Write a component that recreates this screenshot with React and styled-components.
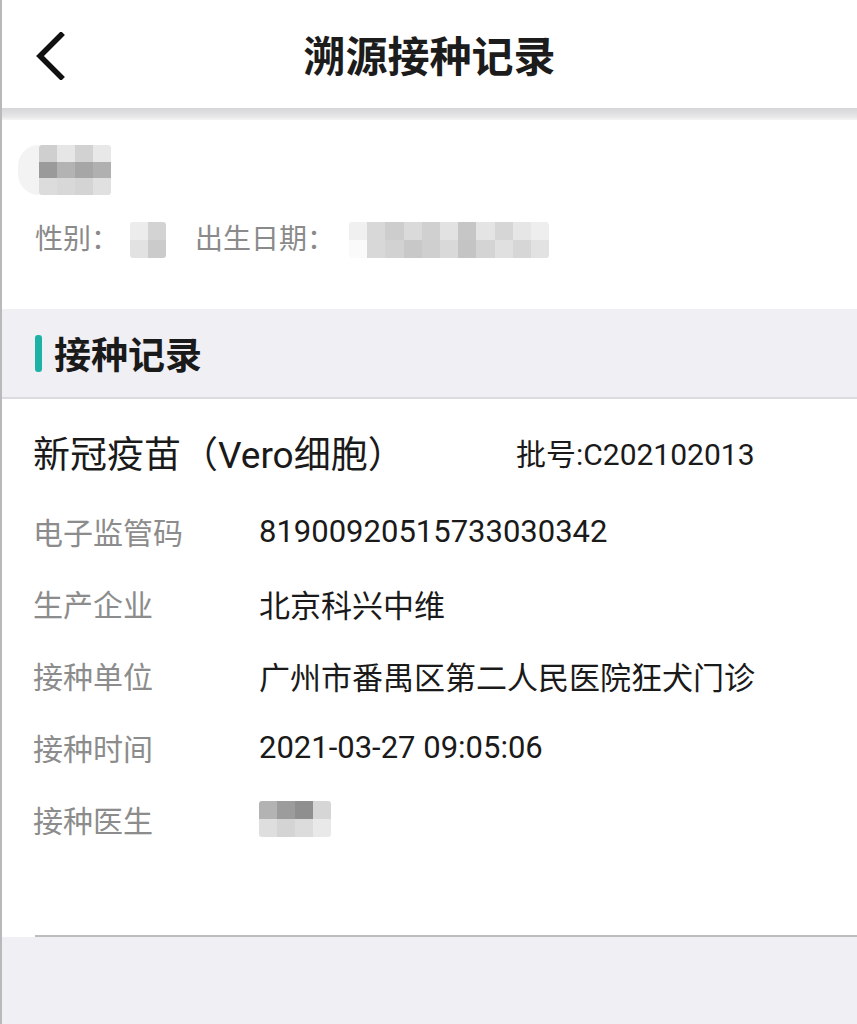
import styled, { createGlobalStyle } from "styled-components";

const GlobalStyle = createGlobalStyle`
    html, body {
        margin: 0;
        padding: 0;
        background: #efeff4;
    }
    * {
        box-sizing: border-box;
    }
`

const FONT = `Roboto, "Noto Sans CJK SC", "Noto Sans", sans-serif`

const records = [
    { label: "电子监管码", value: "81900920515733030342" },
    { label: "生产企业", value: "北京科兴中维" },
    { label: "接种单位", value: "广州市番禺区第二人民医院狂犬门诊" },
    { label: "接种时间", value: "2021-03-27 09:05:06" },
    { label: "接种医生", mosaic: [["#b3b3b3", "#9c9c9c", "#8f8f8f", "#d6d6d6"], ["#dedede", "#d4d4d4", "#dcdcdc", "#e9e9e9"]] },
]

const nameCells = [
    ["#cfcfcf", "#e6e6e6", "#d2d2d2", "#e8e8e8"],
    ["#9a9a9a", "#b3b3b3", "#a6a6a6", "#b0b0b0"],
    ["#dcdcdc", "#d8d8d8", "#d4d4d4", "#e0e0e0"],
]
const genderCells = [["#ececec", "#d3d3d3"], ["#e2e2e2", "#cbcbcb"]]
const birthCells = [
    ["#f0f0f0", "#d8d8d8", "#cdcdcd", "#dadada", "#d0d0d0", "#e2e2e2", "#c6c6c6", "#e4e4e4", "#d6d6d6", "#e6e6e6", "#eeeeee"],
    ["#fafafa", "#d8d8d8", "#d2d2d2", "#c8c8c8", "#cfcfcf", "#d9d9d9", "#c4c4c4", "#d4d4d4", "#e0e0e0", "#d6d6d6", "#e2e2e2"],
]

function Mosaic({ cells, size = 18, h }) {
    return (
        <Grid cols={cells[0].length} size={size} h={h || size}>
            {cells.flat().map((c, i) => (
                <Cell key={i} color={c} />
            ))}
        </Grid>
    )
}

export default function App() {
    return (
        <>
            <GlobalStyle />
            <Page>
                <Header>
                    <BackButton>
                        <svg width="30" height="48" viewBox="0 0 30 48" fill="none">
                            <path d="M25 3 L4 24 L25 45" stroke="#111" strokeWidth="5.5" strokeLinecap="square" strokeLinejoin="miter" />
                        </svg>
                    </BackButton>
                    <Title>溯源接种记录</Title>
                </Header>
                <ShadowBand />
                <PersonInfo>
                    <NameBlur>
                        <FadeTail />
                        <Mosaic cells={nameCells} size={18} h={16.5} />
                    </NameBlur>
                    <InfoRow>
                        <InfoLabel>性别：</InfoLabel>
                        <Mosaic cells={genderCells} size={18} />
                        <InfoLabel gap>出生日期：</InfoLabel>
                        <Mosaic cells={birthCells} size={18.2} />
                    </InfoRow>
                </PersonInfo>
                <SectionHeader>
                    <Accent />
                    <SectionTitle>接种记录</SectionTitle>
                </SectionHeader>
                <Card>
                    <VaccineRow>
                        <VaccineName>新冠疫苗（Vero细胞）</VaccineName>
                        <Batch>批号:C202102013</Batch>
                    </VaccineRow>
                    {records.map((r) => (
                        <Row key={r.label}>
                            <Label>{r.label}</Label>
                            {r.mosaic ? <Mosaic cells={r.mosaic} size={18} /> : <Value>{r.value}</Value>}
                        </Row>
                    ))}
                </Card>
                <Divider />
                <Footer />
            </Page>
        </>
    )
}

const Page = styled.div`
    width: 857px;
    height: 1024px;
    display: flex;
    flex-direction: column;
    background: #fff;
    border-left: 2px solid #b9b9b9;
    font-family: ${FONT};
    overflow: hidden;
`

const Header = styled.header`
    height: 108px;
    display: flex;
    align-items: center;
    justify-content: center;
    position: relative;
    background: #fff;
`

const BackButton = styled.div`
    position: absolute;
    left: 34px;
    top: 32px;
    width: 30px;
    height: 48px;
    display: flex;
`

const Title = styled.h1`
    margin: 0 0 2px 0;
    font-size: 42px;
    font-weight: 700;
    color: #1c1c1c;
`

const ShadowBand = styled.div`
    height: 12px;
    background: linear-gradient(#d6d6d8, #e6e6e8 70%, #f4f4f4);
`

const PersonInfo = styled.section`
    height: 189px;
    padding: 25px 0 0 16px;
    display: flex;
    flex-direction: column;
`

const NameBlur = styled.div`
    display: flex;
    align-items: stretch;
    height: 50px;
`

const FadeTail = styled.div`
    width: 21px;
    background: #f3f3f3;
    border-radius: 25px 0 0 25px;
`

const Grid = styled.div`
    display: grid;
    grid-template-columns: repeat(${(p) => p.cols}, ${(p) => p.size}px);
    grid-auto-rows: ${(p) => p.h}px;
    border-radius: 3px;
    overflow: hidden;
    align-self: center;
`

const Cell = styled.div`
    background: ${(p) => p.color};
`

const InfoRow = styled.div`
    display: flex;
    align-items: center;
    margin-top: 27px;
    padding-left: 17px;
`

const InfoLabel = styled.span`
    font-size: 28px;
    color: #8a8a8a;
    margin-right: ${(p) => (p.gap ? "14px" : "11px")};
    margin-left: ${(p) => (p.gap ? "29px" : "0")};
    line-height: 36px;
`

const SectionHeader = styled.div`
    height: 90px;
    background: #efeff4;
    border-bottom: 2px solid #dcdce0;
    display: flex;
    align-items: center;
    padding-left: 33px;
`

const Accent = styled.div`
    width: 7px;
    height: 37px;
    border-radius: 3px;
    background: #1cb3a6;
    margin-right: 12px;
`

const SectionTitle = styled.h2`
    margin: 0;
    font-size: 37px;
    font-weight: 700;
    color: #1a1a1a;
`

const Card = styled.section`
    background: #fff;
    padding: 17px 0 80px 31px;
    display: flex;
    flex-direction: column;
`

const VaccineRow = styled.div`
    height: 72px;
    display: flex;
    align-items: center;
    margin-bottom: 7px;
`

const VaccineName = styled.span`
    font-size: 37px;
    color: #1a1a1a;
    width: 483px;
`

const Batch = styled.span`
    font-size: 30px;
    color: #1a1a1a;
`

const Row = styled.div`
    height: 72px;
    display: flex;
    align-items: center;
`

const Label = styled.span`
    width: 226px;
    font-size: 30px;
    color: #8c8c8c;
`

const Value = styled.span`
    font-size: 31px;
    color: #1a1a1a;
`

const Divider = styled.div`
    height: 2px;
    margin-left: 33px;
    background: #bdbdbd;
`

const Footer = styled.div`
    flex: 1;
    background: #efeff4;
`
